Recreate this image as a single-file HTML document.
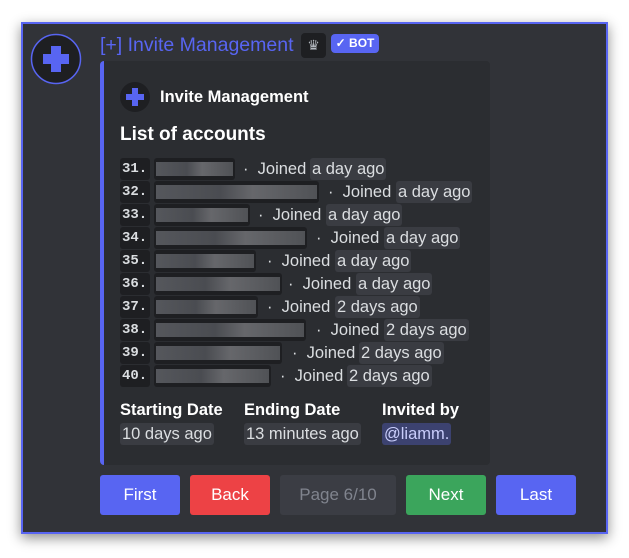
<!DOCTYPE html><html><head><meta charset="utf-8"><style>
*{margin:0;padding:0;box-sizing:border-box}
body{width:629px;height:558px;background:#fff;position:relative;overflow:hidden;font-family:"Liberation Sans",sans-serif}
.panel{position:absolute;left:21px;top:22px;width:587px;height:512px;background:#313338;border:2px solid #5865f2;box-shadow:0 4px 12px rgba(0,0,0,.45)}
.a{position:absolute}
.t{position:absolute;color:#dbdee1;font-size:16.5px;white-space:nowrap;line-height:20px}
.ts{position:absolute;background:#3a3c42;border-radius:3px;height:22px;color:#dbdee1;font-size:16.5px;line-height:22px;padding:0 2px;white-space:nowrap}
.num{position:absolute;left:120px;width:30px;height:22px;background:#1e1f22;border-radius:3px;color:#dbdee1;font:bold 14px "Liberation Mono",monospace;line-height:22px;padding-left:2px}
.nm{position:absolute;left:154px;height:22px;background:#1e1f22;border-radius:3px}
.nm i{position:absolute;left:2px;right:2px;top:4px;bottom:4px;background:linear-gradient(90deg,#55575c,#4a4c51 40%,#66676b 60%,#505256)}
.btn{position:absolute;top:475px;height:40px;border-radius:3px;color:#fff;font-size:17px;line-height:40px;text-align:center}
</style></head><body>
<div class="panel"></div>
<svg class="a" style="left:30px;top:33px" width="52" height="52" viewBox="0 0 52 52"><circle cx="26" cy="26" r="24.5" fill="#1e1f22" stroke="#5865f2" stroke-width="1.5"/><path d="M21 13h10v8h8v10h-8v8H21v-8h-8V21h8z" fill="#5865f2"/></svg>
<div class="t" style="left:100px;top:34px;color:#5865f2;font-size:19.5px;line-height:22px">[+] Invite Management</div>
<div class="a" style="left:301px;top:33px;width:25px;height:25px;background:#1e1f22;border-radius:4px;color:#b5bac1;font-size:14px;text-align:center;line-height:25px">♛</div>
<div class="a" style="left:331px;top:34px;width:48px;height:19px;background:#5865f2;border-radius:4px;color:#fff;font-size:12px;font-weight:bold;line-height:19px;text-align:center">✓ BOT</div>
<div class="a" style="left:100px;top:61px;width:390px;height:404px;background:#2b2d31;border-left:4px solid #5865f2;border-radius:4px"></div>
<svg class="a" style="left:120px;top:82px" width="30" height="30" viewBox="0 0 30 30"><circle cx="15" cy="15" r="15" fill="#1e1f22"/><path d="M12 6h6v6h6v6h-6v6h-6v-6H6v-6h6z" fill="#5865f2"/></svg>
<div class="t" style="left:160px;top:87px;color:#fff;font-weight:bold;font-size:16.5px">Invite Management</div>
<div class="t" style="left:120px;top:124px;color:#fff;font-weight:bold;font-size:19px;line-height:22px">List of accounts</div>

<div class="num" style="top:158px">31.</div><div class="nm" style="top:158px;width:81px"><i></i></div><div class="t" style="left:243px;top:159px">·&nbsp; Joined</div><div class="ts" style="left:310px;top:158px">a day ago</div>
<div class="num" style="top:181px">32.</div><div class="nm" style="top:181px;width:165px"><i></i></div><div class="t" style="left:328px;top:182px">·&nbsp; Joined</div><div class="ts" style="left:396px;top:181px">a day ago</div>
<div class="num" style="top:204px">33.</div><div class="nm" style="top:204px;width:96px"><i></i></div><div class="t" style="left:258px;top:205px">·&nbsp; Joined</div><div class="ts" style="left:326px;top:204px">a day ago</div>
<div class="num" style="top:227px">34.</div><div class="nm" style="top:227px;width:153px"><i></i></div><div class="t" style="left:316px;top:228px">·&nbsp; Joined</div><div class="ts" style="left:384px;top:227px">a day ago</div>
<div class="num" style="top:250px">35.</div><div class="nm" style="top:250px;width:102px"><i></i></div><div class="t" style="left:267px;top:251px">·&nbsp; Joined</div><div class="ts" style="left:335px;top:250px">a day ago</div>
<div class="num" style="top:273px">36.</div><div class="nm" style="top:273px;width:128px"><i></i></div><div class="t" style="left:288px;top:274px">·&nbsp; Joined</div><div class="ts" style="left:356px;top:273px">a day ago</div>
<div class="num" style="top:296px">37.</div><div class="nm" style="top:296px;width:104px"><i></i></div><div class="t" style="left:267px;top:297px">·&nbsp; Joined</div><div class="ts" style="left:335px;top:296px">2 days ago</div>
<div class="num" style="top:319px">38.</div><div class="nm" style="top:319px;width:152px"><i></i></div><div class="t" style="left:316px;top:320px">·&nbsp; Joined</div><div class="ts" style="left:384px;top:319px">2 days ago</div>
<div class="num" style="top:342px">39.</div><div class="nm" style="top:342px;width:128px"><i></i></div><div class="t" style="left:292px;top:343px">·&nbsp; Joined</div><div class="ts" style="left:359px;top:342px">2 days ago</div>
<div class="num" style="top:365px">40.</div><div class="nm" style="top:365px;width:117px"><i></i></div><div class="t" style="left:280px;top:366px">·&nbsp; Joined</div><div class="ts" style="left:347px;top:365px">2 days ago</div>

<div class="t" style="left:120px;top:400px;color:#fff;font-weight:bold">Starting Date</div>
<div class="t" style="left:244px;top:400px;color:#fff;font-weight:bold">Ending Date</div>
<div class="t" style="left:382px;top:400px;color:#fff;font-weight:bold">Invited by</div>
<div class="ts" style="left:120px;top:423px">10 days ago</div>
<div class="ts" style="left:244px;top:423px">13 minutes ago</div>
<div class="ts" style="left:382px;top:423px;background:#3c4270;color:#c9cdfb">@liamm.</div>

<div class="btn" style="left:100px;width:80px;background:#5865f2">First</div>
<div class="btn" style="left:190px;width:80px;background:#ed4245">Back</div>
<div class="btn" style="left:280px;width:116px;background:#3b3d44;color:#80848e">Page 6/10</div>
<div class="btn" style="left:406px;width:80px;background:#3ba55c">Next</div>
<div class="btn" style="left:496px;width:80px;background:#5865f2">Last</div>
</body></html>
